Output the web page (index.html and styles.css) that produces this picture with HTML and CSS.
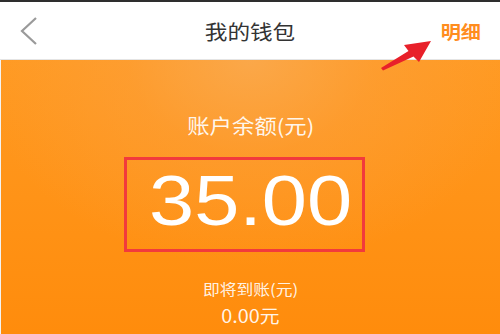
FILE: index.html
```html
<!DOCTYPE html>
<html lang="zh-CN">
<head>
<meta charset="utf-8">
<title>我的钱包</title>
<link rel="stylesheet" href="styles.css">
</head>
<body>
<div class="page">
  <header class="header">
    <div class="back">
      <svg width="22" height="30" viewBox="0 0 22 30"><path d="M18 2 L4 15 L18 28" fill="none" stroke="#9a9a9a" stroke-width="2.2"/></svg>
    </div>
    <div class="title">我的钱包</div>
    <div class="detail">明细</div>
  </header>
  <main class="wallet">
    <div class="label">账户余额(元)</div>
    <div class="amount-box"><span class="amount">35.00</span></div>
    <div class="sub-label">即将到账(元)</div>
    <div class="sub-amount">0.00元</div>
  </main>
  <svg class="arrow" width="60" height="36" viewBox="378 38 60 36"><polygon points="381,68 408.5,51 404,45 431,41 419,62 413.5,56.5 383,70.5" fill="#e8202a"/></svg>
</div>
</body>
</html>
```
FILE: styles.css
```css
html, body {
  margin: 0;
  padding: 0;
  background: #fff;
}
.page {
  position: relative;
  width: 500px;
  height: 334px;
  overflow: hidden;
  border-top: 2px solid #2e2e2e;
  box-sizing: border-box;
  display: flex;
  flex-direction: column;
  font-family: "Noto Sans CJK SC", "Noto Sans", sans-serif;
}
.header {
  height: 58px;
  flex: none;
  box-sizing: border-box;
  border-bottom: 1px solid #e4e4e4;
  display: grid;
  grid-template-columns: 1fr auto 1fr;
  align-items: center;
  padding: 0 19px 0 18px;
}
.back {
  display: flex;
  align-items: center;
}
.title {
  font-size: 20px;
  line-height: 20px;
  color: #333;
  padding-top: 2px;
  transform: scaleX(1.13);
}
.detail {
  justify-self: end;
  font-size: 18px;
  line-height: 18px;
  font-weight: 700;
  color: #ff8d1e;
  padding-top: 1px;
  transform: scaleX(1.12);
  transform-origin: right center;
}
.wallet {
  flex: 1;
  border-left: 1px solid #f3f3f3;
  background:
    radial-gradient(ellipse 55% 75% at 50% 0%, rgba(250,170,80,0.85) 0%, rgba(252,160,60,0.5) 45%, rgba(255,148,24,0) 100%),
    linear-gradient(#ff9a22, #ff8c0c);
  display: flex;
  flex-direction: column;
  align-items: center;
  padding-top: 56px;
  color: #fff;
}
.label {
  font-size: 20px;
  line-height: 20px;
  color: rgba(255,255,255,0.92);
  transform: scaleX(1.12);
}
.amount-box {
  margin-top: 21px;
  margin-right: 13px;
  width: 241px;
  height: 95px;
  box-sizing: border-box;
  border: 3px solid #f23a3c;
  padding: 6px 0 0 13px;
  display: flex;
  justify-content: center;
}
.amount {
  font-family: "Liberation Sans", Arial, sans-serif;
  font-size: 70px;
  line-height: 70px;
  color: #fff;
  transform: scaleX(1.16);
}
.sub-label {
  margin-top: 29px;
  font-size: 15px;
  line-height: 15px;
  color: rgba(255,255,255,0.9);
  transform: scaleX(1.12);
}
.sub-amount {
  margin-top: 10px;
  font-size: 18px;
  line-height: 18px;
  color: rgba(255,255,255,0.92);
  transform: scaleX(1.1);
}
.arrow {
  position: absolute;
  left: 378px;
  top: 36px;
}
```
